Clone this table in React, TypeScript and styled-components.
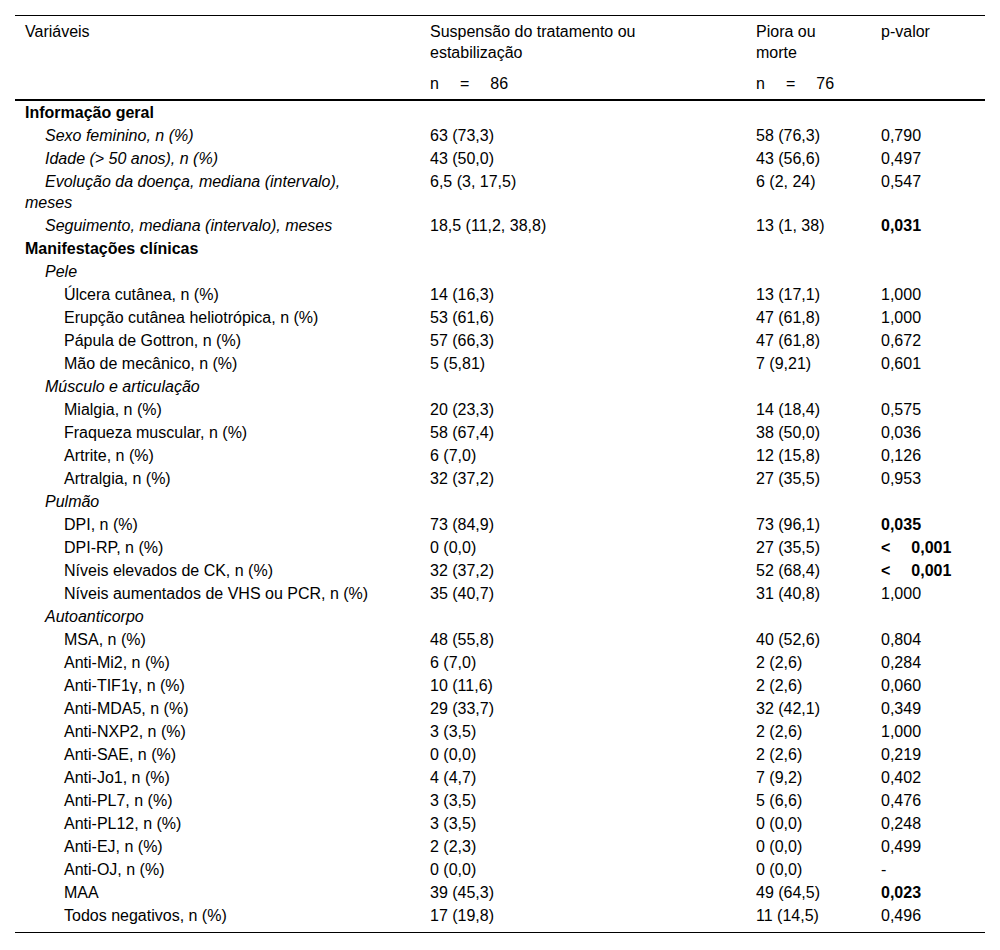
import React from 'react';
import styled, { createGlobalStyle } from 'styled-components';

const GlobalStyle = createGlobalStyle`
  body {
    margin: 0;
    background: #fff;
    font-family: 'Liberation Sans', Arial, sans-serif;
    color: #000;
  }
`;

const Table = styled.table`
  width: 970px;
  margin: 15px;
  border-collapse: collapse;
  table-layout: fixed;
  font-size: 16px;
  line-height: 21px;
  border-top: 1px solid #000;
  border-bottom: 1px solid #000;
`;

const Col = styled.col<{ $w: number }>`
  width: ${(props) => props.$w}px;
`;

const Head = styled.thead`
  border-bottom: 2px solid #000;
`;

const HeadCell = styled.th`
  padding: 5px 10px;
  text-align: left;
  vertical-align: top;
  font-weight: 400;
`;

// header text wraps at a narrower width than the column
const HeadText = styled.div<{ $max?: number }>`
  max-width: ${(props) => (props.$max ? `${props.$max}px` : 'none')};
`;

const Row = styled.tr`
  &:last-child td {
    padding-bottom: 6px;
  }
`;

const LabelCell = styled.td<{ $level: number }>`
  padding: 1px 40px 1px 10px;
  vertical-align: top;
  text-indent: ${(props) => (props.$level === 2 ? 39 : props.$level === 1 ? 20 : 0)}px;
  font-weight: ${(props) => (props.$level === 0 ? 700 : 400)};
  font-style: ${(props) => (props.$level === 1 ? 'italic' : 'normal')};
`;

const ValueCell = styled.td<{ $bold?: boolean }>`
  padding: 1px 10px;
  vertical-align: top;
  white-space: nowrap;
  font-weight: ${(props) => (props.$bold ? 700 : 400)};
`;

const Gap = styled.span`
  display: inline-block;
  width: 21px;
`;

type Line = {
  label: string;
  level: number;
  a?: string;
  b?: string;
  p?: string;
  bold?: boolean;
};

const rows: Line[] = [
  { label: 'Informação geral', level: 0 },
  { label: 'Sexo feminino, n (%)', level: 1, a: '63 (73,3)', b: '58 (76,3)', p: '0,790' },
  { label: 'Idade (> 50 anos), n (%)', level: 1, a: '43 (50,0)', b: '43 (56,6)', p: '0,497' },
  { label: 'Evolução da doença, mediana (intervalo), meses', level: 1, a: '6,5 (3, 17,5)', b: '6 (2, 24)', p: '0,547' },
  { label: 'Seguimento, mediana (intervalo), meses', level: 1, a: '18,5 (11,2, 38,8)', b: '13 (1, 38)', p: '0,031', bold: true },
  { label: 'Manifestações clínicas', level: 0 },
  { label: 'Pele', level: 1 },
  { label: 'Úlcera cutânea, n (%)', level: 2, a: '14 (16,3)', b: '13 (17,1)', p: '1,000' },
  { label: 'Erupção cutânea heliotrópica, n (%)', level: 2, a: '53 (61,6)', b: '47 (61,8)', p: '1,000' },
  { label: 'Pápula de Gottron, n (%)', level: 2, a: '57 (66,3)', b: '47 (61,8)', p: '0,672' },
  { label: 'Mão de mecânico, n (%)', level: 2, a: '5 (5,81)', b: '7 (9,21)', p: '0,601' },
  { label: 'Músculo e articulação', level: 1 },
  { label: 'Mialgia, n (%)', level: 2, a: '20 (23,3)', b: '14 (18,4)', p: '0,575' },
  { label: 'Fraqueza muscular, n (%)', level: 2, a: '58 (67,4)', b: '38 (50,0)', p: '0,036' },
  { label: 'Artrite, n (%)', level: 2, a: '6 (7,0)', b: '12 (15,8)', p: '0,126' },
  { label: 'Artralgia, n (%)', level: 2, a: '32 (37,2)', b: '27 (35,5)', p: '0,953' },
  { label: 'Pulmão', level: 1 },
  { label: 'DPI, n (%)', level: 2, a: '73 (84,9)', b: '73 (96,1)', p: '0,035', bold: true },
  { label: 'DPI-RP, n (%)', level: 2, a: '0 (0,0)', b: '27 (35,5)', p: '< 0,001', bold: true },
  { label: 'Níveis elevados de CK, n (%)', level: 2, a: '32 (37,2)', b: '52 (68,4)', p: '< 0,001', bold: true },
  { label: 'Níveis aumentados de VHS ou PCR, n (%)', level: 2, a: '35 (40,7)', b: '31 (40,8)', p: '1,000' },
  { label: 'Autoanticorpo', level: 1 },
  { label: 'MSA, n (%)', level: 2, a: '48 (55,8)', b: '40 (52,6)', p: '0,804' },
  { label: 'Anti-Mi2, n (%)', level: 2, a: '6 (7,0)', b: '2 (2,6)', p: '0,284' },
  { label: 'Anti-TIF1γ, n (%)', level: 2, a: '10 (11,6)', b: '2 (2,6)', p: '0,060' },
  { label: 'Anti-MDA5, n (%)', level: 2, a: '29 (33,7)', b: '32 (42,1)', p: '0,349' },
  { label: 'Anti-NXP2, n (%)', level: 2, a: '3 (3,5)', b: '2 (2,6)', p: '1,000' },
  { label: 'Anti-SAE, n (%)', level: 2, a: '0 (0,0)', b: '2 (2,6)', p: '0,219' },
  { label: 'Anti-Jo1, n (%)', level: 2, a: '4 (4,7)', b: '7 (9,2)', p: '0,402' },
  { label: 'Anti-PL7, n (%)', level: 2, a: '3 (3,5)', b: '5 (6,6)', p: '0,476' },
  { label: 'Anti-PL12, n (%)', level: 2, a: '3 (3,5)', b: '0 (0,0)', p: '0,248' },
  { label: 'Anti-EJ, n (%)', level: 2, a: '2 (2,3)', b: '0 (0,0)', p: '0,499' },
  { label: 'Anti-OJ, n (%)', level: 2, a: '0 (0,0)', b: '0 (0,0)', p: '-' },
  { label: 'MAA', level: 2, a: '39 (45,3)', b: '49 (64,5)', p: '0,023', bold: true },
  { label: 'Todos negativos, n (%)', level: 2, a: '17 (19,8)', b: '11 (14,5)', p: '0,496' },
];

// "< 0,001" and "n = 86" are set with wide gaps between the parts
function Spaced({ text }: { text: string }) {
  const parts = text.split(' ');
  return (
    <>
      {parts.map((part, i) => (
        <React.Fragment key={i}>
          {i > 0 && <Gap />}
          {part}
        </React.Fragment>
      ))}
    </>
  );
}

function App() {
  return (
    <>
      <GlobalStyle />
      <Table>
        <colgroup>
          <Col $w={405} />
          <Col $w={326} />
          <Col $w={125} />
          <Col $w={114} />
        </colgroup>
        <Head>
          <tr>
            <HeadCell>Variáveis</HeadCell>
            <HeadCell>
              <HeadText $max={250}>Suspensão do tratamento ou estabilização</HeadText>
            </HeadCell>
            <HeadCell>
              <HeadText $max={70}>Piora ou morte</HeadText>
            </HeadCell>
            <HeadCell>p-valor</HeadCell>
          </tr>
          <tr>
            <HeadCell />
            <HeadCell>
              <Spaced text="n = 86" />
            </HeadCell>
            <HeadCell>
              <Spaced text="n = 76" />
            </HeadCell>
            <HeadCell />
          </tr>
        </Head>
        <tbody>
          {rows.map((row) => (
            <Row key={row.label}>
              <LabelCell $level={row.level}>{row.label}</LabelCell>
              <ValueCell>{row.a}</ValueCell>
              <ValueCell>{row.b}</ValueCell>
              <ValueCell $bold={row.bold}>{row.p && <Spaced text={row.p} />}</ValueCell>
            </Row>
          ))}
        </tbody>
      </Table>
    </>
  );
}

export default App;
